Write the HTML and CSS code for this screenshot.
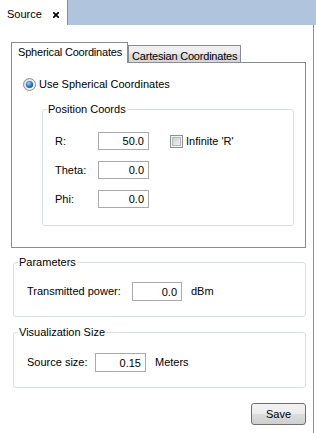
FILE: index.html
```html
<!DOCTYPE html>
<html lang="en">
<head>
    <meta charset="UTF-8">
    <title>Source</title>
    <link rel="stylesheet" href="styles.css">
</head>
<body>
    <div class="window">
        <div class="doc-tabs">
            <div class="doc-tab">
                <span>Source</span>
                <svg class="close" width="6" height="6" viewBox="0 0 6 6">
                    <path d="M0.8 0.8 L5.2 5.2 M5.2 0.8 L0.8 5.2" stroke="#000" stroke-width="1.7" stroke-linecap="square"/>
                </svg>
            </div>
        </div>

        <div class="panel">
            <div class="tabs">
                <div class="tab-strip">
                    <div class="tab active">Spherical Coordinates</div>
                    <div class="tab">Cartesian Coordinates</div>
                </div>
                <div class="tab-page">
                    <label class="check-row">
                        <svg class="radio" width="13" height="13" viewBox="0 0 13 13">
                            <defs>
                                <linearGradient id="rbg" x1="0" y1="0" x2="1" y2="1">
                                    <stop offset="0" stop-color="#d8d8d8"/>
                                    <stop offset="1" stop-color="#fbfbfb"/>
                                </linearGradient>
                                <radialGradient id="rdot" cx="0.4" cy="0.35" r="0.7">
                                    <stop offset="0" stop-color="#a6d8ff"/>
                                    <stop offset="0.5" stop-color="#3a86c8"/>
                                    <stop offset="1" stop-color="#164f86"/>
                                </radialGradient>
                            </defs>
                            <circle cx="6.5" cy="6.5" r="6" fill="url(#rbg)" stroke="#8a8d91"/>
                            <circle cx="6.5" cy="6.5" r="3.6" fill="url(#rdot)"/>
                        </svg>
                        <span>Use Spherical Coordinates</span>
                    </label>

                    <fieldset class="group coords">
                        <legend>Position Coords</legend>
                        <div class="fields">
                            <div class="field">
                                <span class="label">R:</span>
                                <input class="num" type="text" value="50.0">
                                <label class="check-row infinite">
                                    <svg width="13" height="13" viewBox="0 0 13 13">
                                        <defs>
                                            <linearGradient id="cbg" x1="0" y1="0" x2="1" y2="1">
                                                <stop offset="0" stop-color="#c9ccd1"/>
                                                <stop offset="1" stop-color="#f3f3f3"/>
                                            </linearGradient>
                                        </defs>
                                        <rect x="0.5" y="0.5" width="12" height="12" fill="#f4f4f4" stroke="#8e8f8f"/>
                                        <rect x="2.5" y="2.5" width="8" height="8" fill="url(#cbg)" stroke="#b4b8bd"/>
                                    </svg>
                                    <span>Infinite 'R'</span>
                                </label>
                            </div>
                            <div class="field">
                                <span class="label">Theta:</span>
                                <input class="num" type="text" value="0.0">
                            </div>
                            <div class="field">
                                <span class="label">Phi:</span>
                                <input class="num" type="text" value="0.0">
                            </div>
                        </div>
                    </fieldset>
                </div>
            </div>

            <fieldset class="group params">
                <legend>Parameters</legend>
                <div class="param-row">
                    <span class="label power-label">Transmitted power:</span>
                    <input class="num wide" type="text" value="0.0">
                    <span class="unit">dBm</span>
                </div>
            </fieldset>

            <fieldset class="group visual">
                <legend>Visualization Size</legend>
                <div class="param-row">
                    <span class="label size-label">Source size:</span>
                    <input class="num tall" type="text" value="0.15">
                    <span class="unit">Meters</span>
                </div>
            </fieldset>

            <div class="actions">
                <button class="btn">Save</button>
            </div>
        </div>
    </div>
</body>
</html>
```

FILE: styles.css
```css
* {
    box-sizing: border-box;
}

body {
    margin: 0;
    background: #fff;
    color: #000;
    font-family: 'Liberation Sans', Arial, sans-serif;
    font-size: 11px;
    line-height: 13px;
}

.window {
    width: 316px;
    height: 433px;
    display: flex;
    flex-direction: column;
}

/* document tab bar */
.doc-tabs {
    height: 25px;
    flex-shrink: 0;
    background: #b0c4de;
    display: flex;
}

.doc-tab {
    width: 68px;
    background: #fff;
    border-right: 1px solid #8e8f8f;
    padding: 8px 0 0 7px;
    display: flex;
    align-items: flex-start;
    gap: 11px;
}

.doc-tab .close {
    margin-top: 4px;
}

/* main panel */
.panel {
    flex: 1;
    width: 314px;
    border-right: 1px solid #8e8f8f;
    padding: 17px 7px 0 11px;
}

.tab-strip {
    display: flex;
    align-items: flex-end;
}

.tab {
    height: 17px;
    padding: 4px 3px 0 3px;
    border: 1px solid #898c95;
    border-bottom: 0;
    background: linear-gradient(#f2f2f2, #e9e9e9 50%, #dedede 50%, #d6d6d6);
    white-space: nowrap;
    letter-spacing: -0.2px;
}

.tab.active {
    position: relative;
    height: 21px;
    margin-bottom: -1px;
    padding: 3px 5px 0 6px;
    background: #fff;
}

.tab-page {
    border: 1px solid #898c95;
    padding: 15px 11px 21px 11px;
}

.check-row {
    display: flex;
    align-items: center;
    gap: 3px;
}

/* group boxes */
.group {
    margin: 0;
    padding: 0;
    min-width: 0;
    border: 1px solid #d5dfe5;
    border-radius: 3px;
}

.group legend {
    margin-left: 4px;
    padding: 0 1px;
}

.coords {
    margin: 12px 0 0 19px;
}

.fields {
    padding: 16px 12px 17px 12px;
    display: flex;
    flex-direction: column;
    gap: 11px;
}

.field {
    display: flex;
    align-items: center;
}

.field .label {
    width: 43px;
}

.num {
    width: 51px;
    height: 18px;
    margin: 0;
    padding: 0 4px 0 2px;
    border: 1px solid #a9a9a9;
    font-family: inherit;
    font-size: 11px;
    color: #000;
    text-align: right;
    background: #fff;
}

.infinite {
    margin-left: 21px;
}

.params {
    margin: 8px 0 0 2px;
}

.visual {
    margin: 9px 0 0 2px;
}

.param-row {
    padding: 13px 0 15px 13px;
    display: flex;
    align-items: center;
}

.visual .param-row {
    padding-top: 14px;
}

.power-label {
    width: 105px;
}

.size-label {
    width: 68px;
}

.num.wide {
    width: 50px;
    height: 19px;
}

.num.tall {
    height: 19px;
}

.unit {
    margin-left: 9px;
}

.actions {
    display: flex;
    justify-content: flex-end;
    margin-top: 15px;
}

.btn {
    width: 55px;
    height: 22px;
    padding: 0;
    border: 1px solid #707070;
    border-radius: 3px;
    background: linear-gradient(#f2f2f2, #ebebeb 50%, #dddddd 50%, #cfcfcf);
    font-family: inherit;
    font-size: 11px;
    color: #000;
}
```
